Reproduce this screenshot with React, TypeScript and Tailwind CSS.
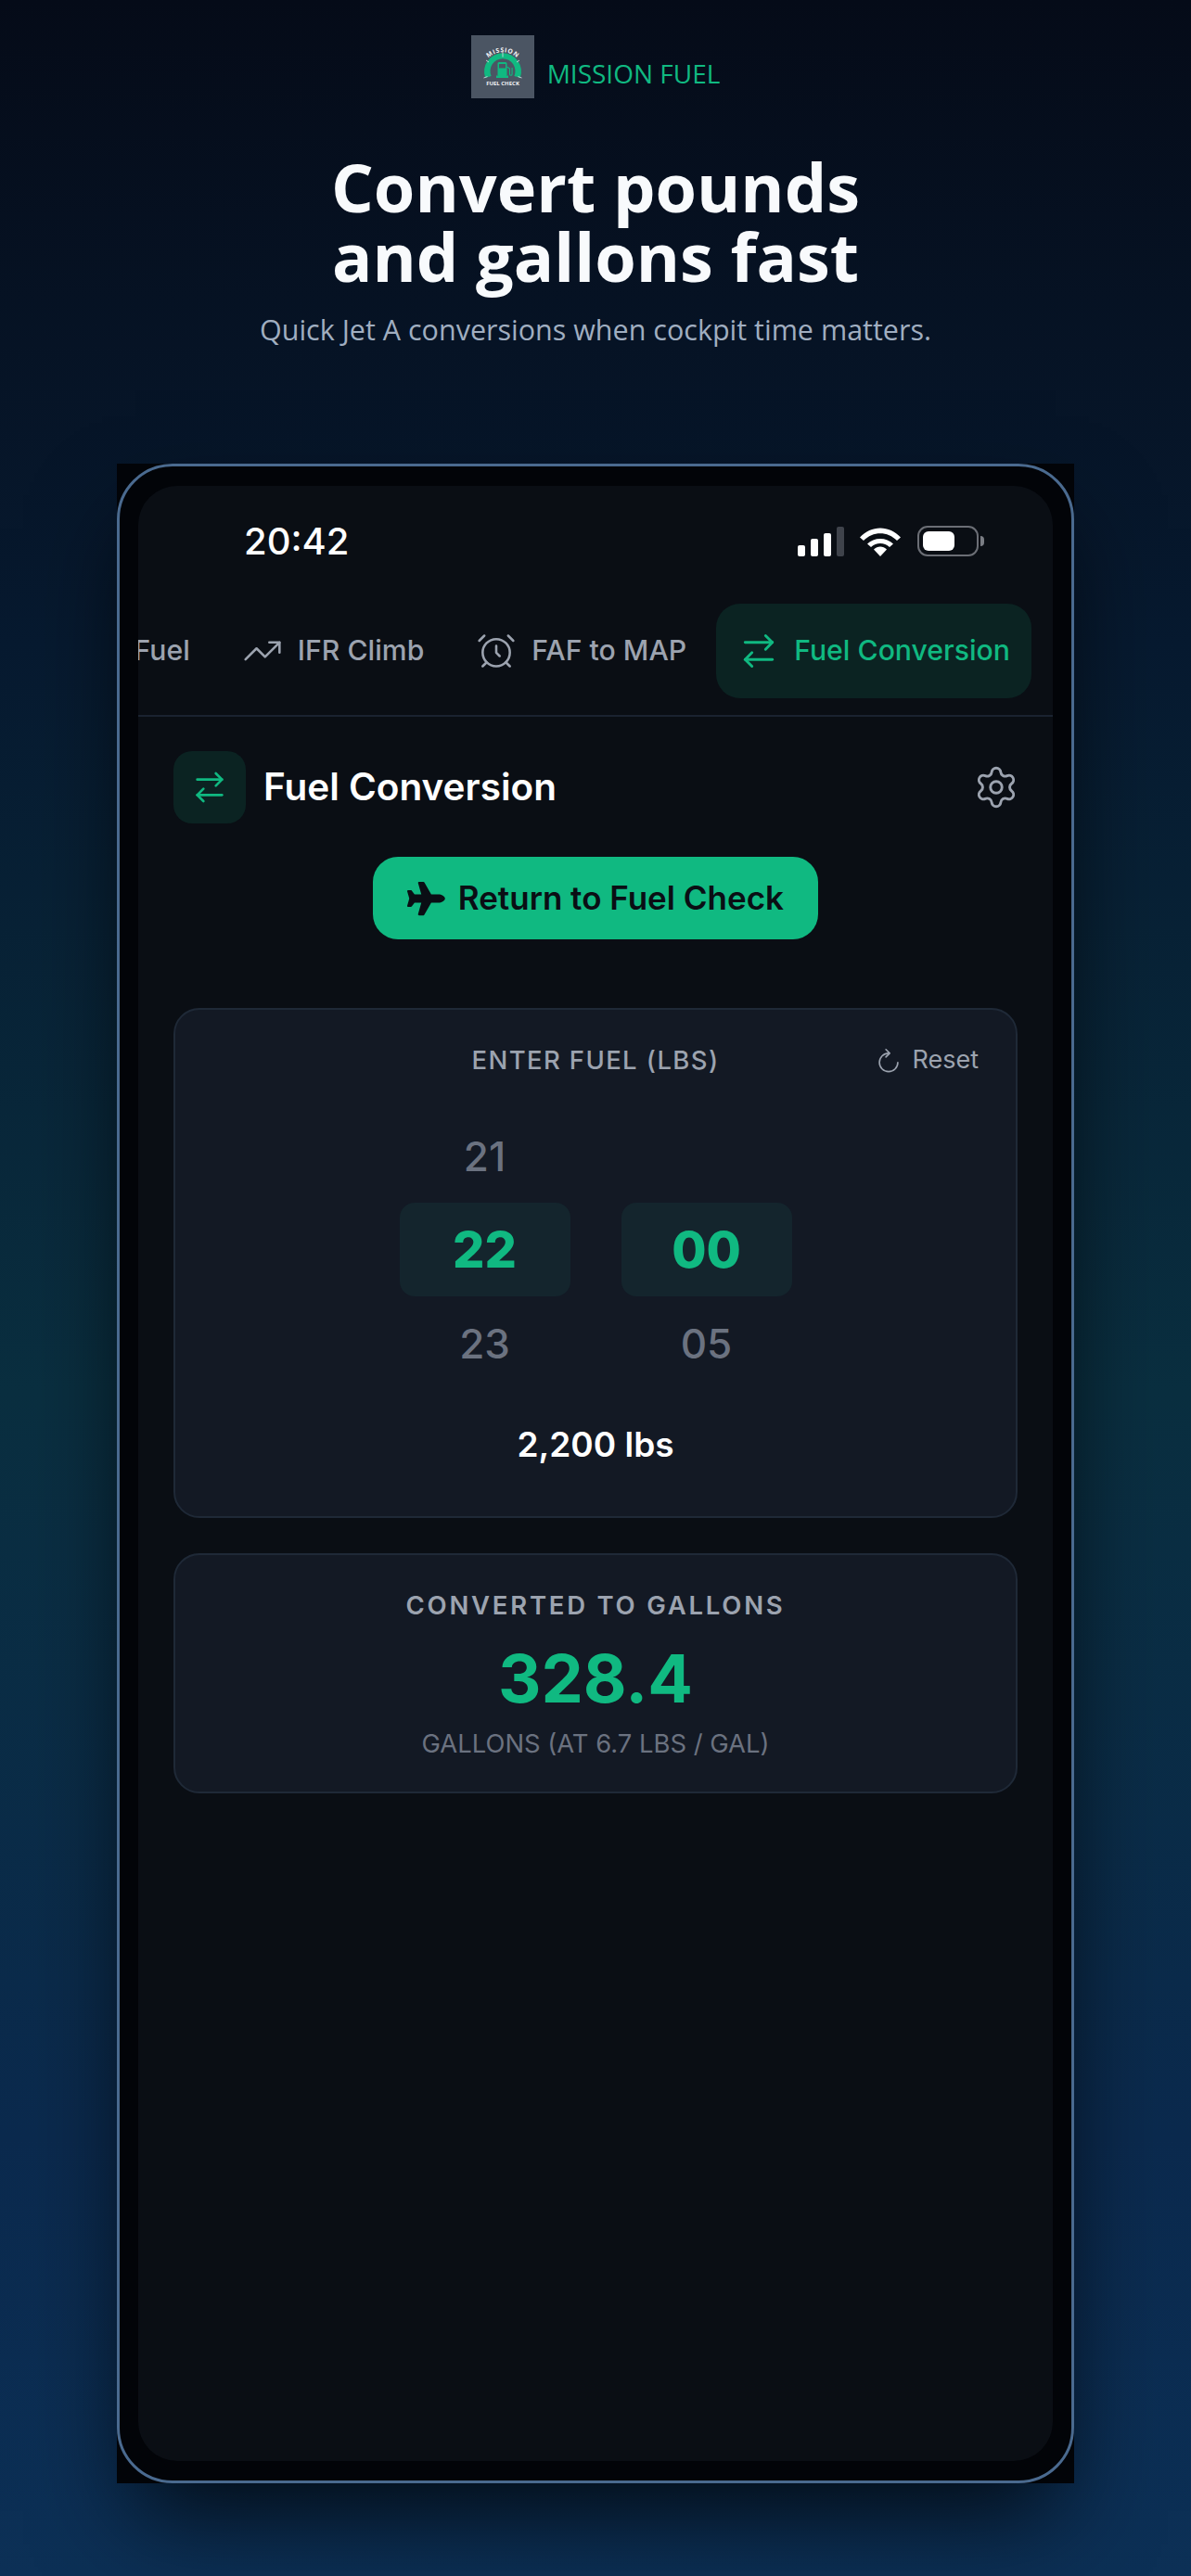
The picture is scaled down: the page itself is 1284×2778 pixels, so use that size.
import { AlarmClock, ArrowRightLeft, Settings, TrendingUp } from 'lucide-react'
import { FaPlane } from 'react-icons/fa'

function Logo() {
  return (
    <svg width="68" height="68" viewBox="0 0 68 68" className="bg-[#4b5563]">
      <defs>
        <path id="mission-arc" d="M12 36 A 22.5 22.5 0 0 1 56 36" fill="none" />
      </defs>
      <text fill="#f3f4f6" fontSize="6.8" fontWeight="700" fontFamily="'Open Sans', sans-serif" letterSpacing="0.7">
        <textPath href="#mission-arc" startOffset="50%" textAnchor="middle">
          MISSION
        </textPath>
      </text>
      <path d="M15.2 46 A 20 20 0 1 1 52.8 46 L 46.4 44 A 13.5 13.5 0 1 0 21.6 44 Z" fill="#10b981" />
      <path d="M34 18v5.5M16 27l3 2M52 27l-3 2M13.5 46l4-1.4M54.5 46l-4-1.4" stroke="#d1d5db" strokeWidth="0.9" />
      <rect x="28.5" y="29" width="10" height="15" rx="1.5" fill="#10b981" />
      <rect x="27" y="43.5" width="13" height="2.5" fill="#10b981" />
      <rect x="30" y="31" width="7" height="4.5" fill="#4b5563" />
      <path d="M38.5 34l3 2v6a1.3 1.3 0 0 0 2.6 0v-7" stroke="#10b981" strokeWidth="1.1" fill="none" />
      <text x="34" y="53.5" textAnchor="middle" fill="#f3f4f6" fontSize="6" fontWeight="700" fontFamily="'Open Sans', sans-serif">
        FUEL CHECK
      </text>
    </svg>
  )
}

function ResetIcon() {
  return (
    <svg width="28" height="28" viewBox="0 0 24 24" fill="none" stroke="currentColor" strokeWidth="1.4" strokeLinecap="round" strokeLinejoin="round">
      <path d="M12 5a8.5 8.5 0 1 0 8.5 8.5" />
      <path d="M9.5 1.5 13 5l-3.500 3.500" />
    </svg>
  )
}

function StatusIcons() {
  return (
    <div className="flex items-center gap-[17px]">
      <div className="flex items-end gap-[6px] h-[32px]">
        <div className="w-[8px] h-[12px] rounded-[2px] bg-white" />
        <div className="w-[8px] h-[19px] rounded-[2px] bg-white" />
        <div className="w-[8px] h-[25px] rounded-[2px] bg-white" />
        <div className="w-[8px] h-[32px] rounded-[2px] bg-[#3f434b]" />
      </div>
      <svg width="44" height="32" viewBox="0 0 44 32" fill="#fff">
        <path d="M0 11.5C12 -2 32 -2 44 11.5L40 15C30 4.5 14 4.5 4 15Z" />
        <path d="M8 18.5C15 11 29 11 36 18.5L32 22C26.5 16.5 17.5 16.5 12 22Z" />
        <path d="M15 24.5C19 20.5 25 20.5 29 24.5L22 32Z" />
      </svg>
      <div className="flex items-center gap-[2px] ml-[1px]">
        <div className="w-[66px] h-[33px] rounded-[11px] border-2 border-[#6b6e75] p-[4px]">
          <div className="w-[34px] h-full rounded-[6px] bg-white" />
        </div>
        <div className="w-[4px] h-[11px] rounded-r-full bg-[#7a7d84]" />
      </div>
    </div>
  )
}

function Tab({ icon, label, active }: { icon?: React.ReactNode; label: string; active?: boolean }) {
  return (
    <div
      className={`flex shrink-0 items-center gap-[16px] h-[102px] rounded-[26px] pl-[24px] pr-[23px] text-[30.2px] font-medium whitespace-nowrap ${
        active ? 'bg-[#0b2322] text-[#10b981]' : 'text-[#9ca3af]'
      }`}
    >
      {icon}
      {label}
    </div>
  )
}

function PickerColumn({ top, value, bottom }: { top?: string; value: string; bottom: string }) {
  return (
    <div className="w-[184px] flex flex-col items-center">
      <div className="h-[101px] flex items-center text-[44px] font-medium text-[#6b7280]">{top}</div>
      <div className="w-full h-[101px] flex items-center justify-center rounded-[16px] bg-[#14252d] text-[54px] font-extrabold text-[#10b981]">
        {value}
      </div>
      <div className="h-[101px] flex items-center text-[44px] font-medium text-[#6b7280]">{bottom}</div>
    </div>
  )
}

export default function App() {
  return (
    <div className="w-[1284px] h-[2778px] overflow-hidden flex flex-col items-center bg-[linear-gradient(180deg,#050b18_0%,#071a30_25%,#0a2f40_54%,#0b2a4e_83%,#0c3056_100%)]">
      <div className="flex items-center gap-[14px] mt-[38px] h-[68px]">
        <Logo />
        <span className="mt-[14px] text-[28px] font-medium text-[#10b981] font-['Open_Sans',sans-serif]">MISSION FUEL</span>
      </div>
      <h1 className="mt-[58px] text-center text-[72px] leading-[75px] font-bold text-[#f8fafc] font-['Open_Sans',sans-serif]">
        Convert pounds
        <br />
        and gallons fast
      </h1>
      <p className="mt-[21px] text-[30.5px] leading-[40px] text-[#a0aec0] font-['Open_Sans',sans-serif]">
        Quick Jet A conversions when cockpit time matters.
      </p>

      <div className="mt-[125px] w-[1032px] h-[2178px] bg-[#020408] shadow-[0_50px_100px_-20px_rgba(0,0,0,0.8)]">
        <div className="h-full rounded-[60px] border-[3px] border-[#4a6a8f] px-[20px] pt-[21px] pb-[21px]">
          <div className="h-full rounded-[42px] bg-[#0a0e14] overflow-hidden font-['Inter',sans-serif]">
            <div className="flex items-center justify-between h-[127px] pb-[8px] pl-[114px] pr-[74px]">
              <span className="text-[40px] font-medium text-white">20:42</span>
              <StatusIcons />
            </div>

            <div className="flex justify-end gap-[9px] overflow-hidden h-[122px] pr-[23px] border-b-2 border-[#1a2230]">
              <Tab label="Fuel" />
              <Tab label="IFR Climb" icon={<TrendingUp size={44} strokeWidth={1.4} />} />
              <Tab label="FAF to MAP" icon={<AlarmClock size={44} strokeWidth={1.4} />} />
              <Tab active label="Fuel Conversion" icon={<ArrowRightLeft size={44} strokeWidth={1.6} />} />
            </div>

            <div className="px-[38px]">
              <div className="flex items-center justify-between mt-[37px]">
                <div className="flex items-center gap-[19px]">
                  <div className="w-[78px] h-[78px] flex items-center justify-center rounded-[20px] bg-[#0b2322] text-[#10b981]">
                    <ArrowRightLeft size={40} strokeWidth={1.6} />
                  </div>
                  <span className="text-[40.5px] font-semibold text-white">Fuel Conversion</span>
                </div>
                <Settings size={50} strokeWidth={1.4} className="text-[#9ca3af] -mr-[2px]" />
              </div>

              <div className="flex justify-center mt-[36px]">
                <div className="flex items-center gap-[14px] w-[480px] h-[89px] px-[37px] rounded-[27px] bg-[#10b981] text-[#0a0e14] text-[35px] font-semibold whitespace-nowrap">
                  <FaPlane size={42} />
                  Return to Fuel Check
                </div>
              </div>

              <div className="mt-[74px] h-[550px] rounded-[28px] border-2 border-[#1f2937] bg-[#131924] flex flex-col">
                <div className="grid grid-cols-[1fr_auto_1fr] items-center mt-[34px] px-[40px]">
                  <div />
                  <span className="text-[27.5px] font-medium tracking-wider text-[#9ca3af]">ENTER FUEL (LBS)</span>
                  <div className="flex items-center justify-end gap-[11px] text-[27px] text-[#9ca3af]">
                    <ResetIcon />
                    Reset
                  </div>
                </div>
                <div className="flex justify-center gap-[55px] mt-[32px]">
                  <PickerColumn top="21" value="22" bottom="23" />
                  <PickerColumn value="00" bottom="05" />
                </div>
                <div className="mt-[31px] text-center text-[37px] font-semibold text-white">2,200 lbs</div>
              </div>

              <div className="mt-[38px] h-[259px] rounded-[28px] border-2 border-[#1f2937] bg-[#131924] flex flex-col items-center">
                <span className="mt-[36px] text-[27.5px] leading-[36px] font-semibold tracking-widest text-[#9ca3af]">
                  CONVERTED TO GALLONS
                </span>
                <span className="mt-[16px] text-[72px] leading-[90px] font-bold text-[#10b981]">328.4</span>
                <span className="mt-[7px] text-[27.4px] leading-[36px] text-[#6b7280]">GALLONS (AT 6.7 LBS / GAL)</span>
              </div>
            </div>
          </div>
        </div>
      </div>
    </div>
  )
}
